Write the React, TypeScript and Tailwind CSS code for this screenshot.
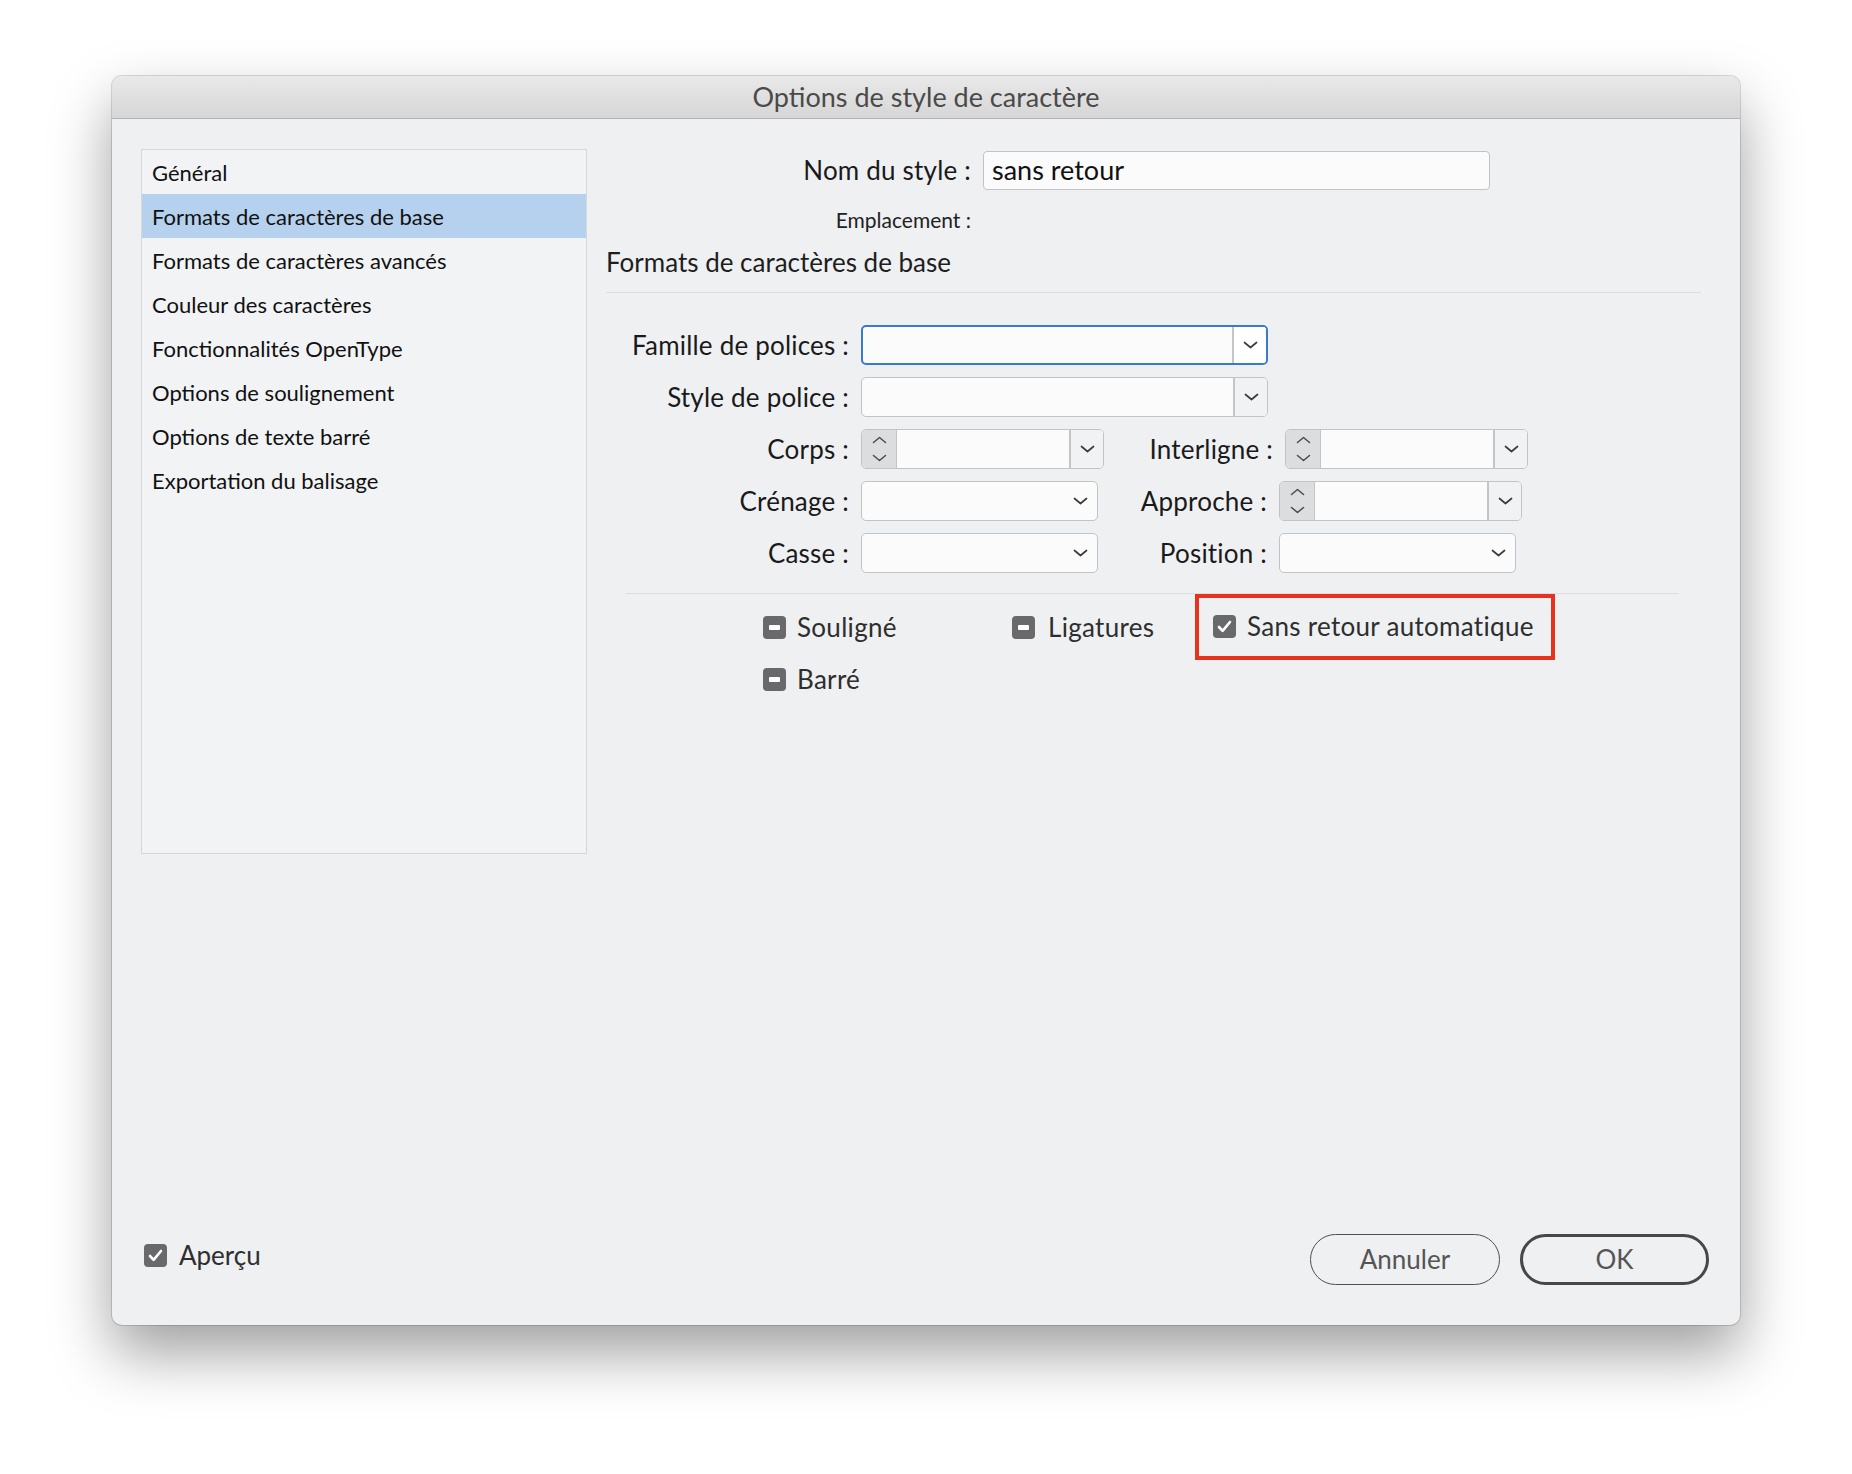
import React from 'react';

const font = { fontFamily: 'Lato, "Noto Sans", sans-serif' };

const sections = [
  'Général',
  'Formats de caractères de base',
  'Formats de caractères avancés',
  'Couleur des caractères',
  'Fonctionnalités OpenType',
  'Options de soulignement',
  'Options de texte barré',
  'Exportation du balisage',
];

function Chevron() {
  return (
    <svg width="15" height="8" viewBox="0 0 15 8" fill="none">
      <path d="M1.5 1.5l6 5 6-5" stroke="#3d3d3d" strokeWidth="1.7" strokeLinecap="round" strokeLinejoin="round" />
    </svg>
  );
}

function Stepper() {
  return (
    <div className="w-[35px] h-full flex flex-col items-center justify-center gap-[10px] bg-[#dcdddf] border-r border-[#c4c5c7]">
      <svg width="15" height="8" viewBox="0 0 15 8" fill="none">
        <path d="M1.5 6.5l6-5 6 5" stroke="#4e4e4e" strokeWidth="1.6" strokeLinecap="round" strokeLinejoin="round" />
      </svg>
      <svg width="15" height="8" viewBox="0 0 15 8" fill="none">
        <path d="M1.5 1.5l6 5 6-5" stroke="#4e4e4e" strokeWidth="1.6" strokeLinecap="round" strokeLinejoin="round" />
      </svg>
    </div>
  );
}

// combo box with a separate chevron button
function Combo({ width, focused, stepper }: { width: string; focused?: boolean; stepper?: boolean }) {
  return (
    <div
      className={`${width} h-[40px] flex rounded-[5px] overflow-hidden bg-[#fbfbfc] ${
        focused ? 'border-2 border-[#3b7acb]' : 'border border-[#c2c3c5]'
      }`}
    >
      {stepper && <Stepper />}
      <div className="flex-1" />
      <div className={`w-[34px] flex items-center justify-center border-l-2 ${focused ? 'border-[#c4c5c7] bg-white' : 'border-[#c4c5c7] bg-[#f1f2f4]'}`}>
        <Chevron />
      </div>
    </div>
  );
}

function Dropdown({ width }: { width: string }) {
  return (
    <div className={`${width} h-[40px] flex items-center justify-end pr-[9px] rounded-[5px] border border-[#c2c3c5] bg-[#fbfbfc]`}>
      <Chevron />
    </div>
  );
}

function Check({ state }: { state: 'checked' | 'mixed' }) {
  return (
    <div className="w-[23px] h-[23px] rounded-[4px] bg-[#69696b] flex items-center justify-center shrink-0">
      {state === 'checked' ? (
        <svg width="15" height="13" viewBox="0 0 15 13" fill="none">
          <path d="M2 7l3.6 3.8L13 2" stroke="white" strokeWidth="2.6" strokeLinecap="round" strokeLinejoin="round" />
        </svg>
      ) : (
        <div className="w-[11px] h-[5px] rounded-[1px] bg-white" />
      )}
    </div>
  );
}

function Label({ text, width }: { text: string; width: string }) {
  return (
    <div className={`${width} pr-[12px] text-right text-[26px] tracking-[0.2px] text-[#1a1a1a] shrink-0 whitespace-nowrap`}>{text}</div>
  );
}

export default function App() {
  return (
    <div className="w-full min-h-[1474px] bg-white pt-[76px] pl-[112px]" style={font}>
      <div className="w-[1628px] h-[1249px] flex flex-col rounded-[10px] bg-[#eff0f2] overflow-hidden shadow-[0_28px_60px_rgba(0,0,0,0.38),0_0_0_1px_rgba(0,0,0,0.14)]">
        {/* Title bar */}
        <div className="h-[43px] shrink-0 flex items-center justify-center bg-gradient-to-b from-[#e9e9e9] to-[#d6d6d6] border-b border-[#b4b4b4]">
          <span className="text-[27px] text-[#4a4a4a]">Options de style de caractère</span>
        </div>

        <div className="flex-1 flex">
          {/* Sections list */}
          <div className="ml-[29px] mt-[30px] w-[446px] h-[705px] border border-[#d6d7d9] bg-[#f2f3f5] shrink-0">
            {sections.map((s, i) => (
              <div
                key={s}
                className={`h-[44px] flex items-center pl-[10px] text-[22px] text-[#111] ${i === 1 ? 'bg-[#b5d1ee]' : ''}`}
              >
                {s}
              </div>
            ))}
          </div>

          {/* Right side */}
          <div className="ml-[19px] w-[1100px]">
            <div className="mt-[32px] flex items-center h-[39px]">
              <Label text="Nom du style :" width="w-[377px]" />
              <div className="w-[507px] h-[39px] flex items-center px-[8px] rounded-[4px] border border-[#c2c3c5] bg-[#fbfbfc] text-[27px] text-[#111]">
                sans retour
              </div>
            </div>
            <div className="h-[24px] mt-[18px] flex items-center">
              <div className="w-[365px] text-right text-[21px] text-[#222]">Emplacement :</div>
            </div>
            <div className="mt-[15px] h-[30px] flex items-center text-[26px] text-[#1e1e1e]">Formats de caractères de base</div>
            <div className="mt-[15px] h-px w-[1095px] bg-[#dcdde0]" />

            <div className="mt-[32px] flex flex-col gap-[12px]">
              <div className="flex items-center">
                <Label text="Famille de polices :" width="w-[255px]" />
                <Combo width="w-[407px]" focused />
              </div>
              <div className="flex items-center">
                <Label text="Style de police :" width="w-[255px]" />
                <Combo width="w-[407px]" />
              </div>
              <div className="flex items-center">
                <Label text="Corps :" width="w-[255px]" />
                <Combo width="w-[243px]" stepper />
                <Label text="Interligne :" width="w-[181px]" />
                <Combo width="w-[243px]" stepper />
              </div>
              <div className="flex items-center">
                <Label text="Crénage :" width="w-[255px]" />
                <Dropdown width="w-[237px]" />
                <Label text="Approche :" width="w-[181px]" />
                <Combo width="w-[243px]" stepper />
              </div>
              <div className="flex items-center">
                <Label text="Casse :" width="w-[255px]" />
                <Dropdown width="w-[237px]" />
                <Label text="Position :" width="w-[181px]" />
                <Dropdown width="w-[237px]" />
              </div>
            </div>

            <div className="mt-[20px] ml-[20px] h-px w-[1053px] bg-[#dcdde0]" />

            <div className="flex items-center h-[66px] text-[26px] tracking-[0.3px] text-[#2e2e2e]">
              <div className="ml-[157px] w-[249px] flex items-center gap-[11px]">
                <Check state="mixed" />
                <span>Souligné</span>
              </div>
              <div className="w-[183px] flex items-center gap-[13px]">
                <Check state="mixed" />
                <span>Ligatures</span>
              </div>
              <div className="h-[66px] w-[360px] -mt-[1px] flex items-center gap-[11px] pl-[14px] border-4 border-[#e8321e]">
                <Check state="checked" />
                <span>Sans retour automatique</span>
              </div>
            </div>
            <div className="flex items-center h-[38px] text-[26px] tracking-[0.3px] text-[#2e2e2e]">
              <div className="ml-[157px] flex items-center gap-[11px]">
                <Check state="mixed" />
                <span>Barré</span>
              </div>
            </div>
          </div>
        </div>

        {/* Footer */}
        <div className="shrink-0 flex items-center justify-between pl-[32px] pr-[31px] pb-[40px]">
          <div className="mb-[9px] flex items-center gap-[12px] text-[26px] text-[#2e2e2e]">
            <Check state="checked" />
            <span>Aperçu</span>
          </div>
          <div className="flex items-center gap-[20px]">
            <button className="w-[190px] h-[51px] rounded-full border-[1.5px] border-[#4f4f4f] text-[26px] text-[#555] bg-transparent">
              Annuler
            </button>
            <button className="w-[189px] h-[51px] rounded-full border-[3px] border-[#474747] text-[26px] text-[#555] bg-transparent">
              OK
            </button>
          </div>
        </div>
      </div>
    </div>
  );
}
